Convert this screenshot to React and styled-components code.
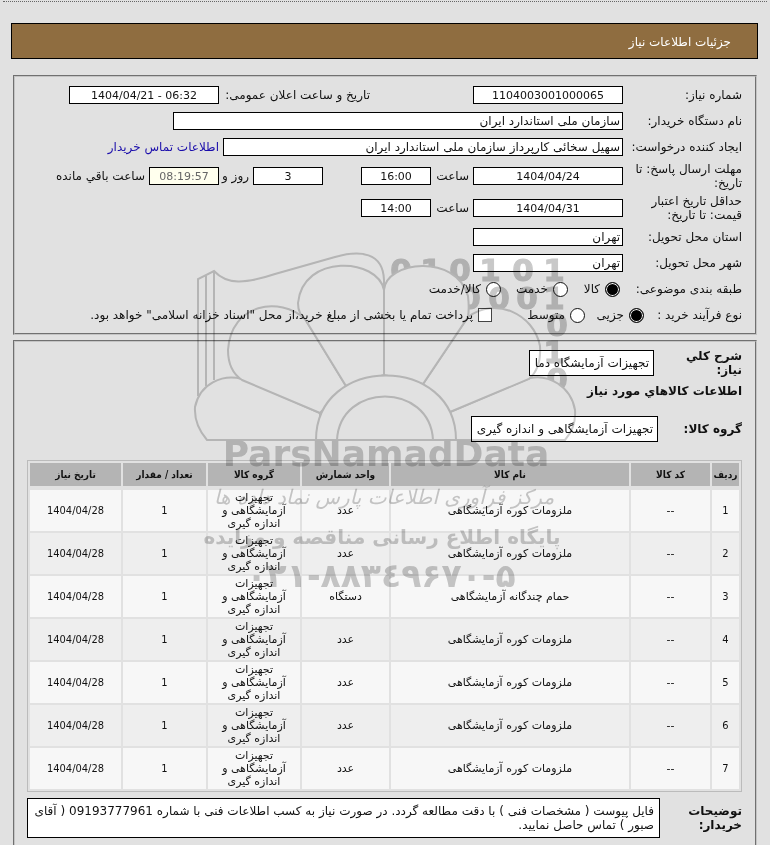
import React from 'react';
import styled, { createGlobalStyle } from 'styled-components';

const GlobalStyle = createGlobalStyle`
  * {
    box-sizing: border-box;
  }

  body {
    margin: 0;
    background: #e1e1e1;
    color: #111;
    font-family: "DejaVu Sans", Tahoma, sans-serif;
    font-size: 12px;
    line-height: 14px;
  }

  input, textarea {
    margin: 0;
    font: inherit;
    color: inherit;
  }
`;

const Page = styled.main`
  position: relative;
  padding: 1px 13px 0;
  overflow: hidden;
`;

const Divider = styled.hr`
  margin: 0 -10px 21px;
  border: none;
  border-top: 1px dotted #666;
`;

const TitleBar = styled.h1`
  display: flex;
  align-items: center;
  height: 36px;
  margin: 0 -1px 16px -2px;
  padding: 2px 26px 0;
  border: 1px solid #000;
  background: #8f6d40;
  color: #fff;
  font-size: 12px;
  font-weight: normal;
`;

const Panel = styled.section`
  margin-bottom: 5px;
  padding: ${props => props.$open ? '7px 13px 30px 12px' : '5px 13px'};
  border: 2px groove #c4c4c4;
`;

const Row = styled.div`
  display: flex;
  align-items: center;
  gap: 4px;
  min-height: ${props => props.$tall ? '32px' : '26px'};
  margin-bottom: ${props => props.$after || '0'};
`;

const Label = styled.label`
  flex: none;
  width: ${props => props.$width || '115px'};
  margin-right: ${props => props.$lead || '0'};
  font-weight: ${props => props.$bold ? 'bold' : 'normal'};
`;

const Note = styled.span`
  white-space: nowrap;
  flex: none;
  width: ${props => props.$width || 'auto'};
`;

const Field = styled.input`
  flex: none;
  width: ${props => props.$width || '150px'};
  height: ${props => props.$large ? '26px' : '18px'};
  margin-right: ${props => props.$lead || '0'};
  padding: ${props => props.$large ? '0 4px' : '0 2px'};
  border: 1px solid #000;
  border-radius: 0;
  background: ${props => props.$timer ? '#ffffee' : '#fff'};
  color: ${props => props.$timer ? '#666' : '#111'};
  font-size: ${props => props.$center ? '11px' : '12px'};
  text-align: ${props => props.$center ? 'center' : 'start'};
  outline-color: #8f6d40;
`;

const ContactLink = styled.a`
  color: #1a0dab;
  text-decoration: none;
  white-space: nowrap;
`;

const Option = styled.label`
  display: flex;
  align-items: center;
  flex: none;
  gap: 5px;
  width: ${props => props.$width || 'auto'};
  white-space: nowrap;
`;

const Radio = styled.input`
  appearance: none;
  flex: none;
  width: 15px;
  height: 15px;
  border: 1px solid #111;
  border-radius: 50%;
  background: #fff;

  &:checked {
    background: #000;
    box-shadow: inset 0 0 0 1px #fff;
  }
`;

const Check = styled.input`
  appearance: none;
  flex: none;
  width: 14px;
  height: 14px;
  border: 1px solid #444;
  background: #fff;

  &:checked {
    background: #444;
    box-shadow: inset 0 0 0 2px #fff;
  }
`;

const SectionTitle = styled.h2`
  margin: 7px 0 18px;
  font-size: 12px;
  line-height: 14px;
`;

const Goods = styled.table`
  width: 100%;
  margin-bottom: 6px;
  table-layout: fixed;
  border: 1px solid #bbb;
  border-collapse: separate;
  border-spacing: 2px;
  font-size: 11px;
  line-height: 13px;
  text-align: center;
`;

const Head = styled.th`
  height: 25px;
  padding: 0;
  border-bottom: 2px solid #e1e1e1;
  background: #b4b4b4;
  font-family: "DejaVu Sans Condensed", "DejaVu Sans", Tahoma, sans-serif;
  font-size: 10px;
  white-space: nowrap;
`;

const GoodsRow = styled.tr`
  background: #f7f7f7;

  &:nth-child(even) {
    background: #eee;
  }
`;

const Cell = styled.td`
  height: 41px;
  padding: 1px 10px;
`;

const NumberCell = styled(Cell)`
  padding: 1px 0;
  font-family: "DejaVu Sans Condensed", "DejaVu Sans", Tahoma, sans-serif;
`;

const Remarks = styled.textarea`
  flex: 1;
  height: 40px;
  padding: 5px;
  border: 1px solid #000;
  border-radius: 0;
  background: #fff;
  resize: none;
  overflow: hidden;
`;

const Watermark = styled.svg`
  position: absolute;
  top: 245px;
  left: 190px;
  width: 390px;
  height: 355px;
  pointer-events: none;
  mix-blend-mode: multiply;
`;

const columns = [
  { title: 'ردیف', width: 27 },
  { title: 'کد کالا', width: 79 },
  { title: 'نام کالا' },
  { title: 'واحد شمارش', width: 87 },
  { title: 'گروه کالا', width: 92 },
  { title: 'تعداد / مقدار', width: 83 },
  { title: 'تاریخ نیاز', width: 91 },
];

const furnace = 'ملزومات کوره آزمایشگاهی';

const goods = [
  { name: furnace, unit: 'عدد' },
  { name: furnace, unit: 'عدد' },
  { name: 'حمام چندگانه آزمایشگاهی', unit: 'دستگاه' },
  { name: furnace, unit: 'عدد' },
  { name: furnace, unit: 'عدد' },
  { name: furnace, unit: 'عدد' },
  { name: furnace, unit: 'عدد' },
];

// digit, centre x, baseline
const bits = [
  ['0', 401, 281], ['1', 431, 281], ['0', 460, 281], ['1', 490, 281], ['0', 523, 281], ['1', 554, 281],
  ['0', 470, 309], ['0', 499, 309], ['0', 527, 309], ['1', 554, 309],
  ['0', 557, 336], ['1', 554, 363], ['0', 557, 390],
];

const Logo = () => (
  <Watermark viewBox="190 245 390 355" direction="ltr" aria-hidden="true">
    <rect x="190" y="245" width="390" height="355" fill="#fff" />
    <g fill="#c8c8c8" stroke="#c8c8c8" strokeWidth="1" fontFamily="DejaVu Sans" fontWeight="bold" fontSize="31" textAnchor="middle">
      {bits.map(([digit, x, y]) => <text key={`${x}-${y}`} x={x} y={y}>{digit}</text>)}
    </g>
    <g fill="#fff" stroke="#cdcdcd" strokeWidth="2">
      <path d="M198 396V279L214 271C227 285 245 284 275 274L335 257C360 250 383 252 384 280V375" />
      <path d="M206 386V276M214 380V271" />
      <path d="M450 412L530 378C548 374 571 386 575 410C576 423 572 432 565 440H450Z" />
      <path d="M320 413L242 379C223 374 200 383 195 407C194 423 201 433 207 440H320Z" />
      <path d="M423 384L468 317C495 296 534 314 540 346C541 360 537 372 529 379L450 412Z" />
      <path d="M346 386L305 319C280 296 231 303 228 350C228 365 233 374 242 380L320 413Z" />
      <path d="M384 375V290C386 261 456 253 468 296C469 305 469 311 468 317L423 384Z" />
      <path d="M384 375V290C378 258 303 253 298 303C298 312 301 315 305 319L346 386Z" />
      <path d="M316 440C316 354 456 354 456 440" />
      <path d="M337 440C340 382 430 382 433 440" />
      <path d="M207 440H565" />
    </g>
    <g fill="#cacaca" textAnchor="middle" fontFamily="DejaVu Sans">
      <text x="386" y="466" fontSize="36" fontWeight="bold">ParsNamadData</text>
      <g direction="rtl">
        <text x="384" y="504" fontSize="20" fontStyle="italic">مرکز فرآوری اطلاعات پارس نماد داده ها</text>
        <text x="382" y="544" fontSize="20" fontWeight="bold">پایگاه اطلاع رسانی مناقصه و مزایده</text>
      </g>
      <text x="381" y="587" fontSize="33" fontWeight="bold">{'\u202d۰۲۱-۸۸۳٤۹۶۷۰-۵\u202c'}</text>
    </g>
  </Watermark>
);

const App = () => {
  return (
    <Page dir="rtl" lang="fa">
      <GlobalStyle />
      <Divider />
      <TitleBar>جزئیات اطلاعات نیاز</TitleBar>
      <Panel>
        <Row>
          <Label htmlFor="number">شماره نیاز:</Label>
          <Field id="number" $center readOnly value="1104003001000065" />
          <Label htmlFor="announced" $width="147px" $lead="99px">تاریخ و ساعت اعلان عمومی:</Label>
          <Field id="announced" dir="ltr" $center readOnly value="1404/04/21 - 06:32" />
        </Row>
        <Row>
          <Label htmlFor="buyer">نام دستگاه خریدار:</Label>
          <Field id="buyer" $width="450px" readOnly value="سازمان ملی استاندارد ایران" />
        </Row>
        <Row>
          <Label htmlFor="creator">ایجاد کننده درخواست:</Label>
          <Field id="creator" $width="400px" readOnly value="سهیل سخائی کارپرداز سازمان ملی استاندارد ایران" />
          <ContactLink href="#contact">اطلاعات تماس خریدار</ContactLink>
        </Row>
        <Row $tall>
          <Label htmlFor="deadline">مهلت ارسال پاسخ: تا تاریخ:</Label>
          <Field id="deadline" dir="ltr" $center readOnly value="1404/04/24" />
          <Note $width="34px">ساعت</Note>
          <Field aria-label="ساعت مهلت" $width="70px" $center readOnly value="16:00" />
          <Field aria-label="روز" $width="70px" $lead="34px" $center readOnly value="3" />
          <Note $width="26px">روز و</Note>
          <Field aria-label="زمان باقی مانده" $width="70px" $timer $center readOnly value="08:19:57" />
          <Note>ساعت باقي مانده</Note>
        </Row>
        <Row $tall>
          <Label htmlFor="validity">حداقل تاریخ اعتبار قیمت: تا تاریخ:</Label>
          <Field id="validity" dir="ltr" $center readOnly value="1404/04/31" />
          <Note $width="34px">ساعت</Note>
          <Field aria-label="ساعت اعتبار" $width="70px" $center readOnly value="14:00" />
        </Row>
        <Row>
          <Label htmlFor="province">استان محل تحویل:</Label>
          <Field id="province" readOnly value="تهران" />
        </Row>
        <Row>
          <Label htmlFor="city">شهر محل تحویل:</Label>
          <Field id="city" readOnly value="تهران" />
        </Row>
        <Row role="radiogroup" aria-labelledby="category">
          <Label as="span" id="category" $width="118px">طبقه بندی موضوعی:</Label>
          <Option $width="48px"><Radio type="radio" name="category" defaultChecked />کالا</Option>
          <Option $width="63px"><Radio type="radio" name="category" />خدمت</Option>
          <Option><Radio type="radio" name="category" />کالا/خدمت</Option>
        </Row>
        <Row role="radiogroup" aria-labelledby="process">
          <Label as="span" id="process" $width="94px">نوع فرآیند خرید :</Label>
          <Option $width="55px"><Radio type="radio" name="process" defaultChecked />جزیی</Option>
          <Option $width="89px"><Radio type="radio" name="process" />متوسط</Option>
          <Option><Check type="checkbox" />پرداخت تمام یا بخشی از مبلغ خرید،از محل "اسناد خزانه اسلامی" خواهد بود.</Option>
        </Row>
      </Panel>
      <Panel $open>
        <Row>
          <Label htmlFor="summary" $bold $width="84px">شرح کلي نیاز:</Label>
          <Field id="summary" $large $width="125px" readOnly value="تجهیزات آزمایشگاه دما" />
        </Row>
        <SectionTitle>اطلاعات کالاهاي مورد نیاز</SectionTitle>
        <Row $after="18px">
          <Label htmlFor="group" $bold $width="80px">گروه کالا:</Label>
          <Field id="group" $large $width="187px" readOnly value="تجهیزات آزمایشگاهی و اندازه گیری" />
        </Row>
        <Goods>
          <colgroup>
            {columns.map(column => <col key={column.title} width={column.width} />)}
          </colgroup>
          <thead>
            <tr>
              {columns.map(column => <Head key={column.title} scope="col">{column.title}</Head>)}
            </tr>
          </thead>
          <tbody>
            {goods.map((item, index) => (
              <GoodsRow key={index}>
                <NumberCell>{index + 1}</NumberCell>
                <Cell>--</Cell>
                <Cell>{item.name}</Cell>
                <Cell>{item.unit}</Cell>
                <Cell>تجهیزات آزمایشگاهی و اندازه گیری</Cell>
                <NumberCell>1</NumberCell>
                <NumberCell><bdo dir="ltr">1404/04/28</bdo></NumberCell>
              </GoodsRow>
            ))}
          </tbody>
        </Goods>
        <Row>
          <Label htmlFor="remarks" $bold $width="78px">توضیحات خریدار:</Label>
          <Remarks
            id="remarks"
            readOnly
            value="فایل پیوست ( مشخصات فنی ) با دقت مطالعه گردد. در صورت نیاز به کسب اطلاعات فنی با شماره 09193777961 ( آقای صبور ) تماس حاصل نمایید."
          />
        </Row>
      </Panel>
      <Logo />
    </Page>
  );
}

export default App;
